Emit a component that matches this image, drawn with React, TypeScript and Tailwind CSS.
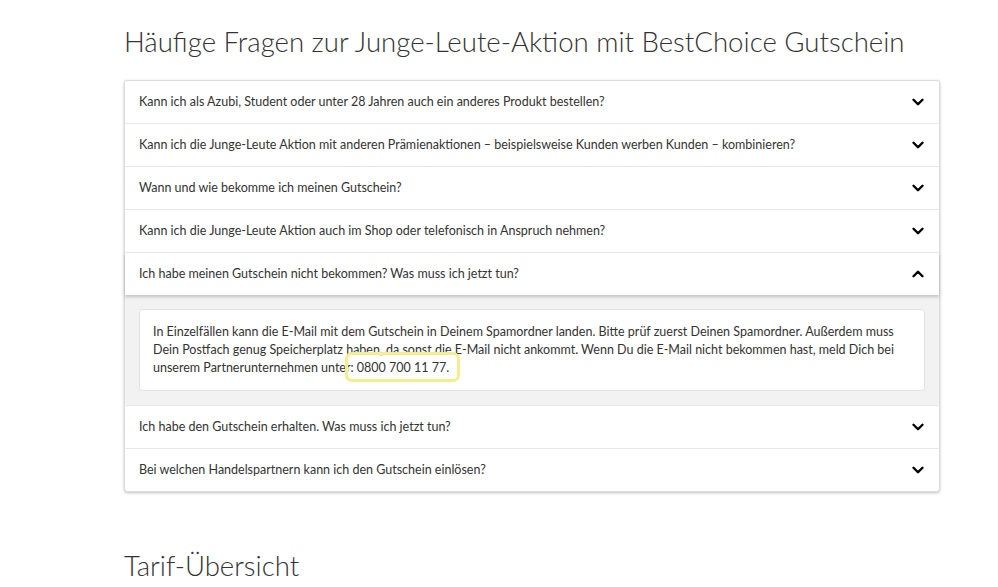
import { ChevronDown, ChevronUp } from 'lucide-react';

const questions = [
	'Kann ich als Azubi, Student oder unter 28 Jahren auch ein anderes Produkt bestellen?',
	'Kann ich die Junge-Leute Aktion mit anderen Prämienaktionen – beispielsweise Kunden werben Kunden – kombinieren?',
	'Wann und wie bekomme ich meinen Gutschein?',
	'Kann ich die Junge-Leute Aktion auch im Shop oder telefonisch in Anspruch nehmen?',
	'Ich habe meinen Gutschein nicht bekommen? Was muss ich jetzt tun?',
	'Ich habe den Gutschein erhalten. Was muss ich jetzt tun?',
	'Bei welchen Handelspartnern kann ich den Gutschein einlösen?',
];

const OPEN = 4;

export default function App() {
	return (
		<div
			className="min-h-screen bg-white text-[#333] pl-[124px] pt-[26px]"
			style={{ fontFamily: 'Lato, "Open Sans", sans-serif' }}
		>
			<h1 className="text-[27.6px] font-light leading-[32px] whitespace-nowrap">
				Häufige Fragen zur Junge-Leute-Aktion mit BestChoice Gutschein
			</h1>

			{/* Accordion */}
			<div className="mt-[22px] w-[816px] rounded-[3px] border border-[#dcdcdc] shadow-[0_1px_3px_rgba(0,0,0,0.25)] bg-white">
				{questions.map((q, i) => {
					const open = i === OPEN;
					return (
						<div key={i} className={i > 0 ? 'border-t border-[#e8e8e8]' : ''}>
							<div
								className={`flex items-center justify-between h-[42px] pl-[14px] pr-[12px] text-[12.5px] ${
									open ? 'relative shadow-[0_2px_3px_rgba(0,0,0,0.2)]' : ''
								}`}
							>
								<span>{q}</span>
								{open ? (
									<ChevronUp size={18} strokeWidth={3.2} className="text-black" />
								) : (
									<ChevronDown size={18} strokeWidth={3.2} className="text-black" />
								)}
							</div>
							{open && (
								<div className="bg-[#f2f2f2] px-[14px] py-[14px]">
									<div className="bg-white border border-[#e3e3e3] rounded-[3px] px-[13px] py-[13px] text-[12.5px] leading-[18px] whitespace-nowrap">
										In Einzelfällen kann die E-Mail mit dem Gutschein in Deinem Spamordner landen. Bitte prüf zuerst
										Deinen Spamordner. Außerdem muss
										<br />
										Dein Postfach genug Speicherplatz haben, da sonst die E-Mail nicht ankommt. Wenn Du die E-Mail
										nicht bekommen hast, meld Dich bei
										<br />
										unserem Partnerunternehmen unter
										<span className="relative">
											: 0800 700 11 77.
											<span className="absolute left-[-6px] right-[-11px] top-[-8px] bottom-[-7px] rounded-[7px] border-[3px] border-[#f4ee8c]" />
										</span>
									</div>
								</div>
							)}
						</div>
					);
				})}
			</div>

			<h2 className="mt-[58px] text-[27.6px] font-light leading-[32px]">Tarif-Übersicht</h2>
		</div>
	);
}
